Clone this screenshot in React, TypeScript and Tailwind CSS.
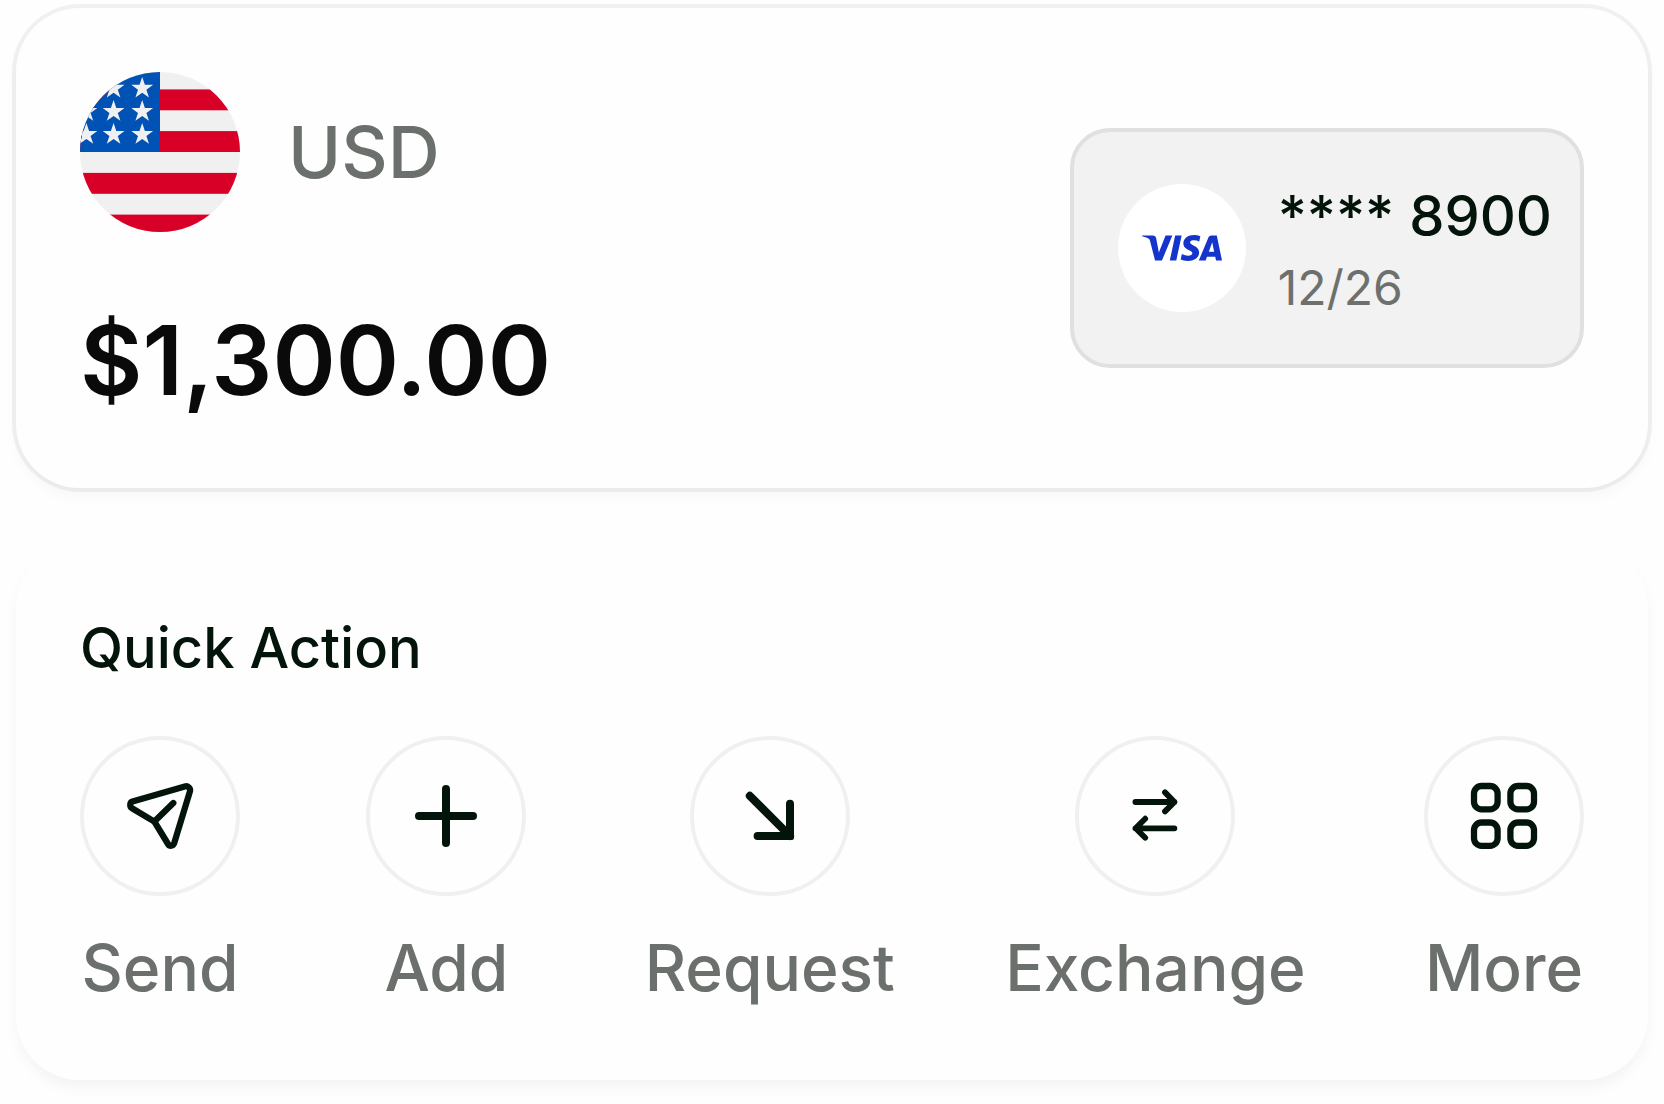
import React from 'react';
import { SiVisa } from 'react-icons/si';

const starPoints = '0,-11.4 2.7,-3.5 10.9,-3.5 4.2,1.4 6.8,9.2 0,4.4 -6.8,9.2 -4.2,1.4 -10.9,-3.5 -2.7,-3.5';

const UsFlag: React.FC = () => (
  <svg viewBox="0 0 160 160" className="size-40 shrink-0" role="img" aria-label="United States">
    <defs>
      <clipPath id="flag-circle">
        <circle cx="80" cy="80" r="80" />
      </clipPath>
    </defs>
    <g clipPath="url(#flag-circle)">
      <rect width="160" height="160" fill="#f0f0f0" />
      {[17.4, 59.1, 100.9, 142.6].map((y) => (
        <rect key={y} y={y} width="160" height="20.9" fill="#d80027" />
      ))}
      <rect width="80" height="80" fill="#0052b4" />
      {[16.3, 39.5, 62.5].map((y) =>
        [6.4, 33.6, 62.2].map((x) => (
          <polygon key={`${x}-${y}`} points={starPoints} transform={`translate(${x} ${y})`} fill="#f0f0f0" />
        ))
      )}
    </g>
  </svg>
);

type IconProps = { strokeWidth: number; children: React.ReactNode };

const ActionIcon: React.FC<IconProps> = ({ strokeWidth, children }) => (
  <svg
    viewBox="0 0 80 80"
    className="size-20"
    fill="none"
    stroke="currentColor"
    strokeWidth={strokeWidth}
    strokeLinecap="round"
    strokeLinejoin="round"
    aria-hidden="true"
  >
    {children}
  </svg>
);

const actions = [
  {
    label: 'Send',
    icon: (
      <ActionIcon strokeWidth={6.3}>
        <path d="M12.5 25.6 64.8 10.4C68 9.5 70.8 12.3 69.9 15.5L54.2 67.2C53.3 70.2 49.6 70.6 48 68L34.4 45.6 12 32.2C9.5 30.6 9.7 26.5 12.5 25.6Z" />
        <path d="M34.4 45.6 53.3 27" />
      </ActionIcon>
    ),
  },
  {
    label: 'Add',
    icon: (
      <ActionIcon strokeWidth={8}>
        <path d="M40 13V67M13 40H67" />
      </ActionIcon>
    ),
  },
  {
    label: 'Request',
    icon: (
      <ActionIcon strokeWidth={8}>
        <path d="M19.8 19.8 60 60M60 27.8V60H27.6" />
        <path d="M55 55H61.5V61.5H55Z" strokeWidth={5} fill="currentColor" />
      </ActionIcon>
    ),
  },
  {
    label: 'Exchange',
    icon: (
      <ActionIcon strokeWidth={5.8}>
        <path d="M20.4 26H59.4M50 16.4 59.4 26 50 35.4" />
        <path d="M59.4 52.3H20.4M30.2 42.7 20.6 52.3 30.2 61.7" />
      </ActionIcon>
    ),
  },
  {
    label: 'More',
    icon: (
      <ActionIcon strokeWidth={6.3}>
        <rect x="10" y="10" width="23.6" height="23.3" rx="7.5" />
        <rect x="46.4" y="10" width="23.6" height="23.3" rx="7.5" />
        <rect x="10" y="46.5" width="23.6" height="23.3" rx="7.5" />
        <rect x="46.4" y="46.5" width="23.6" height="23.3" rx="7.5" />
      </ActionIcon>
    ),
  },
];

const BalanceCard: React.FC = () => (
  <section className="flex items-center justify-between rounded-[64px] bg-[#fefefe] p-16 shadow-[0_0_0_4px_rgba(8,8,20,0.05),0_8px_16px_rgba(0,0,0,0.03)]">
    <div className="flex flex-col gap-16">
      <div className="flex items-center gap-12">
        <UsFlag />
        <span className="text-7xl font-medium text-[#6b706c]">USD</span>
      </div>
      <p className="text-8xl leading-[128px] font-semibold text-[#0a0a0a]">$1,300.00</p>
    </div>

    {/* Linked card */}
    <div className="flex h-60 items-center gap-8 rounded-[40px] border-4 border-[#e0e0e0] bg-[#f2f2f2] pr-7 pl-11">
      <div className="flex size-32 shrink-0 items-center justify-center rounded-full bg-white text-[#1434cb]">
        <SiVisa size={80} title="Visa" />
      </div>
      <div className="whitespace-nowrap">
        <p className="text-[56px] leading-[80px] font-medium text-[#03140a]">**** 8900</p>
        <p className="text-5xl leading-[64px] text-[#6e706e]">12/26</p>
      </div>
    </div>
  </section>
);

const QuickActions: React.FC = () => (
  <section className="rounded-[64px] bg-[#fefefe] p-16 shadow-[0_8px_16px_-2px_rgba(0,0,0,0.05)]">
    <h2 className="text-[56px] leading-[80px] font-medium text-[#03140a]">Quick Action</h2>
    <div className="mt-12 flex justify-between">
      {actions.map((action) => (
        <button key={action.label} type="button" className="flex min-w-40 cursor-pointer flex-col items-center gap-6">
          <span className="flex size-40 items-center justify-center rounded-full border-4 border-[#f0f0f0] text-[#03140a]">
            {action.icon}
          </span>
          <span className="-mx-2 text-[64px] leading-[96px] font-medium text-[#6b706c]">{action.label}</span>
        </button>
      ))}
    </div>
  </section>
);

export default function App() {
  return (
    <main className="flex min-h-screen flex-col gap-14 bg-[#fefefe] px-4 py-2 font-['Inter',sans-serif]">
      <BalanceCard />
      <QuickActions />
    </main>
  );
}
